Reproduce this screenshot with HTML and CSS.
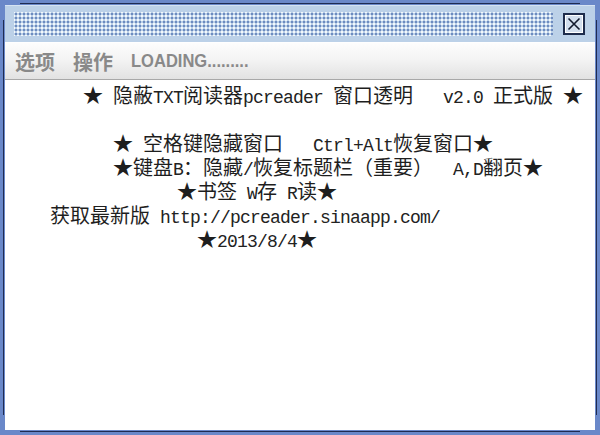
FILE: index.html
```html
<!DOCTYPE html>
<html>
<head>
<meta charset="utf-8">
<link rel="stylesheet" href="styles.css">
</head>
<body>
<div class="frame">
  <div class="titlebar">
    <div class="bumps"></div>
    <div class="close">
      <svg width="22" height="22" viewBox="0 0 22 22">
        <rect x="1" y="1" width="20" height="20" fill="#d3dfee" stroke="#1e2c4c" stroke-width="2"/>
        <rect x="2.5" y="2.5" width="17" height="17" fill="none" stroke="#ffffff" stroke-width="1"/>
        <path d="M5.5 5.5 L16.5 16.5 M16.5 5.5 L5.5 16.5" stroke="#111a2e" stroke-width="1.6" fill="none"/>
      </svg>
    </div>
  </div>
  <div class="menubar">
    <span class="menu">选项</span>
    <span class="menu">操作</span>
    <span class="menu en">LOADING.........</span>
  </div>
  <div class="content">
    <div class="line l1">★<span class="m"> </span>隐蔽<span class="m">TXT</span>阅读器<span class="m">pcreader </span>窗口透明<span class="m">   v2.0 </span>正式版<span class="m"> </span>★</div>
    <div class="line"> </div>
    <div class="line l3">★<span class="m"> </span>空格键隐藏窗口<span class="m">   Ctrl+Alt</span>恢复窗口★</div>
    <div class="line l4">★键盘<span class="m">B</span>：隐藏<span class="m">/</span>恢复标题栏（重要）<span class="m">  A,D</span>翻页★</div>
    <div class="line l5">★书签<span class="m"> W</span>存<span class="m"> R</span>读★</div>
    <div class="line l6">获取最新版<span class="m"> http://pcreader.sinaapp.com/</span></div>
    <div class="line l7">★<span class="m">2013/8/4</span>★</div>
  </div>
  <div class="edge edge-top"></div>
  <div class="edge edge-bottom"></div>
  <div class="edge edge-left"></div>
  <div class="edge edge-right"></div>
</div>
</body>
</html>
```
FILE: styles.css
```css
html, body {
  margin: 0;
  padding: 0;
  background: #ffffff;
}

.frame {
  position: relative;
  width: 600px;
  height: 435px;
  box-sizing: border-box;
  padding: 5px;
  background: #6a88c9;
  display: flex;
  flex-direction: column;
}

.titlebar {
  height: 37px;
  box-sizing: border-box;
  background: #bcd1e8;
  border-top: 1px solid #d6e3f2;
  display: flex;
  align-items: center;
  padding: 0 10px 0 9px;
}

.bumps {
  flex: 1;
  height: 24px;
  margin-right: 10px;
  background-color: #bcd1e8;
  background-image:
    radial-gradient(circle, #6e8bbf 1px, transparent 1.4px),
    radial-gradient(circle, #f4f8fc 0.9px, transparent 1.3px);
  background-size: 4px 4px, 4px 4px;
  background-position: 0 0, 2px 2px;
}

.close {
  width: 22px;
  height: 22px;
  display: flex;
}

.menubar {
  height: 38px;
  box-sizing: border-box;
  background: linear-gradient(#fdfdfd, #f4f4f4 45%, #e2e2e2);
  border-top: 1px solid #ffffff;
  border-bottom: 1px solid #a8a8a8;
  display: flex;
  align-items: center;
  padding-left: 1px;
  font-family: "Noto Sans CJK SC", sans-serif;
  font-size: 20px;
  font-weight: 700;
  color: #898989;
}

.menu {
  padding: 0 9px;
}

.menu.en {
  display: inline-block;
  font-family: "Liberation Sans", "Noto Sans", sans-serif;
  font-size: 19px;
  transform: scaleX(0.87);
  transform-origin: 9px 50%;
}

.content {
  flex: 1;
  background: #ffffff;
  padding-top: 3px;
  font-family: "Noto Sans CJK SC", sans-serif;
  font-size: 20px;
  line-height: 24px;
  color: #1e1e1e;
}

.line {
  white-space: pre;
  height: 24px;
}

.m {
  font-family: "Liberation Mono", monospace;
  font-size: 18px;
  letter-spacing: -0.8px;
  color: #222;
}

.l1 { padding-left: 78px; }
.l3 { padding-left: 108px; }
.l4 { padding-left: 108px; }
.l5 { padding-left: 172px; }
.l6 { padding-left: 45px; }
.l7 { padding-left: 192px; }

.edge {
  position: absolute;
  background: #1f2c52;
}
.edge-top { top: 3px; left: 20px; right: 20px; height: 1px; }
.edge-bottom { bottom: 3px; left: 20px; right: 20px; height: 1px; }
.edge-left { left: 3px; top: 20px; bottom: 20px; width: 1px; }
.edge-right { right: 3px; top: 20px; bottom: 20px; width: 1px; }
```
